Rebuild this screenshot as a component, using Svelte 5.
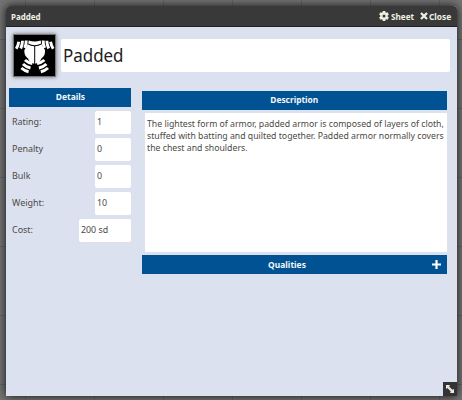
<script>
  const details = [
    { label: 'Rating:', value: '1' },
    { label: 'Penalty', value: '0' },
    { label: 'Bulk', value: '0' },
    { label: 'Weight:', value: '10' },
    { label: 'Cost:', value: '200 sd', wide: true }
  ];
  const description = [
    'The lightest form of armor, padded armor is composed of layers of cloth,',
    'stuffed with batting and quilted together. Padded armor normally covers',
    'the chest and shoulders.'
  ];
</script>

<div class="scene">
  <section class="window">
    <header>
      <h4><span class="txt">Padded</span></h4>
      <span class="control sheet">
        <svg width="10" height="10" viewBox="0 0 20 20">
          <path fill="#f0f0e0" fill-rule="evenodd" d="M7.500 0h5l.6 3 1.200.7 2.900-1 2.500 4.300-2.300 2v2l2.300 2-2.500 4.300-2.900-1-1.200.7-.6 3h-5l-.6-3-1.200-.7-2.900 1L.3 13l2.300-2V9L.3 7l2.500-4.300 2.900 1L6.900 3zM10 7a3 3 0 1 0 0 6 3 3 0 0 0 0-6z" />
        </svg>
        <span class="txt">Sheet</span>
      </span>
      <span class="control close">
        <svg width="8" height="8" viewBox="0 0 8 8">
          <path d="M1 1l6 6M7 1L1 7" stroke="#f0f0e0" stroke-width="2.300" />
        </svg>
        <span class="txt">Close</span>
      </span>
    </header>

    <div class="content">
      <div class="identity">
        <div class="portrait">
          <svg width="41" height="41" viewBox="0 0 41 41">
            <g fill="#fff">
              <path d="M14.700 5.500q6 2 12 0l.5 3q-6.500 3.400-13 0z" />
              <path d="M13.700 9.300q3.200 1.900 6.500 2v17.500q-4.600-1-6.200-5.300-4.400-3.600-3.600-8.500 2-2.300 3.300-5.700z" />
              <path d="M27.700 9.300q-3.200 1.900-6.500 2v17.500q4.600-1 6.200-5.300 4.400-3.600 3.600-8.500-2-2.300-3.300-5.700z" />
            </g>
            <g fill="none" stroke="#fff" stroke-width="2.900">
              <path d="M12.200 5.500q.2 4-1.500 7.500M8.500 5.800Q8.500 10 6.700 13.500M4.800 6.800q-.6 3.800-2.600 7" />
              <path d="M29.200 5.500q-.2 4 1.500 7.500M32.900 5.800q0 4.200 1.800 7.700M36.600 6.800q.6 3.800 2.600 7" />
            </g>
            <g fill="none" stroke="#fff" stroke-width="3">
              <path d="M11 25q3 2.800 7.300 3.500M9 29q3 3 7.500 4M7.400 33q3 2.800 7.200 3.700" />
              <path d="M30.400 25q-3 2.800-7.300 3.500M32.400 29q-3 3-7.500 4M34 33q-3 2.800-7.200 3.700" />
            </g>
          </svg>
        </div>
        <div class="name"><span class="txt">Padded</span></div>
      </div>

      <div class="columns">
        <div class="left">
          <h3><span class="txt">Details</span></h3>
          {#each details as d}
            <div class="row">
              <span class="txt">{d.label}</span>
              <div class="field" class:wide={d.wide}><span class="txt">{d.value}</span></div>
            </div>
          {/each}
        </div>
        <div class="right">
          <h3 class="about"><span class="txt">Description</span></h3>
          <div class="desc">
            {#each description as line}
              <div class="line">{line}</div>
            {/each}
          </div>
          <h3 class="qualities">
            <span class="txt">Qualities</span>
            <svg width="9" height="9" viewBox="0 0 9 9"><path d="M4.500 0v9M0 4.500h9" stroke="#fff" stroke-width="2.200" /></svg>
          </h3>
        </div>
      </div>
    </div>

    <div class="resize">
      <svg width="8" height="8" viewBox="0 0 9 9">
        <path fill="#e8e8e0" d="M0 0h4.500L3.500 1.700l3.700 3.600L9 4.500V9H4.500l.9-1.800-3.700-3.700L0 4.500z" />
      </svg>
    </div>
  </section>
</div>

<style>
  :global(body) { margin: 0; }
  .scene {
    width: 462px;
    height: 400px;
    box-sizing: border-box;
    padding: 6px 5px 4px 6px;
    overflow: hidden;
    background:
      repeating-linear-gradient(90deg, transparent 0 25px, #656565 25px 26px, transparent 26px 69px),
      repeating-linear-gradient(180deg, transparent 0 39px, #656565 39px 40px, transparent 40px 69px),
      #757575;
    font-family: "Noto Sans", "Open Sans", sans-serif;
    font-size: 9.5px;
    color: #4b4a45;
  }
  .window {
    position: relative;
    width: 451px;
    height: 390px;
    background: #dce1ef;
    border-radius: 4px 4px 0 0;
    box-shadow: 0 0 10px #111;
  }
  .txt {
    display: inline-block;
    white-space: nowrap;
    transform: scaleX(0.94);
    transform-origin: 0 50%;
  }
  header {
    height: 21px;
    box-sizing: border-box;
    display: flex;
    align-items: center;
    padding: 0 4px 0 5px;
    background: #393939;
    border-bottom: 1px solid #202020;
    border-radius: 4px 4px 0 0;
    color: #f0f0e4;
    font-weight: 700;
  }
  h4 { margin: 0; flex: 1; font-size: 9.5px; }
  h4 .txt { transform: scaleX(0.84); }
  .control { display: flex; align-items: center; gap: 2px; }
  .control svg { flex: none; }
  .sheet { width: 41px; }
  .sheet .txt { transform: scaleX(0.86); }
  .close { width: 33px; gap: 1px; }
  .close .txt { transform: scaleX(0.88); }
  .content { padding: 7px 7px 0 3px; }
  .identity { display: flex; height: 42px; padding-left: 4px; }
  .portrait {
    width: 41px;
    height: 41px;
    border: 1px solid #777;
    background: #000;
    box-shadow: 0 0 4px #666;
  }
  .portrait svg { display: block; }
  .name {
    flex: 1;
    height: 33px;
    margin: 5px 0 0 5px;
    padding-left: 2px;
    background: #fff;
    border-radius: 2px;
    font-size: 18px;
    line-height: 33px;
    color: #222;
  }
  .columns { display: flex; padding-top: 12px; }
  .left { width: 122px; }
  .right { width: 305px; margin: 3px 0 0 11px; }
  h3 {
    margin: 0;
    height: 19px;
    line-height: 18px;
    background: #005292;
    color: #f3f7fb;
    text-align: center;
    font-size: 9.5px;
    font-weight: 700;
  }
  h3 .txt { transform: scaleX(0.89); transform-origin: 50% 50%; }
  .about .txt { transform: scaleX(0.88); }
  .row {
    display: flex;
    justify-content: space-between;
    height: 23px;
    margin-top: 4px;
    padding-left: 3px;
    line-height: 22px;
  }
  .field {
    width: 36px;
    box-sizing: border-box;
    padding-left: 2px;
    background: #fff;
    border-radius: 2px;
  }
  .field.wide { width: 52px; }
  .field .txt { transform: scaleX(0.93); }
  .desc {
    height: 134px;
    margin: 3px 0 3px 3px;
    padding: 5px 0 0 2px;
    background: #fff;
    line-height: 12px;
    white-space: nowrap;
  }
  .line { width: max-content; transform: scaleX(0.917); transform-origin: 0 50%; margin-right: -40px; }
  .qualities {
    display: flex;
    align-items: center;
    padding-right: 6px;
  }
  .qualities .txt { flex: 1; }
  .qualities svg { flex: none; }
  .resize {
    position: absolute;
    right: 0;
    bottom: 0;
    width: 14px;
    height: 14px;
    display: flex;
    align-items: center;
    justify-content: center;
    background: #333;
  }
</style>
